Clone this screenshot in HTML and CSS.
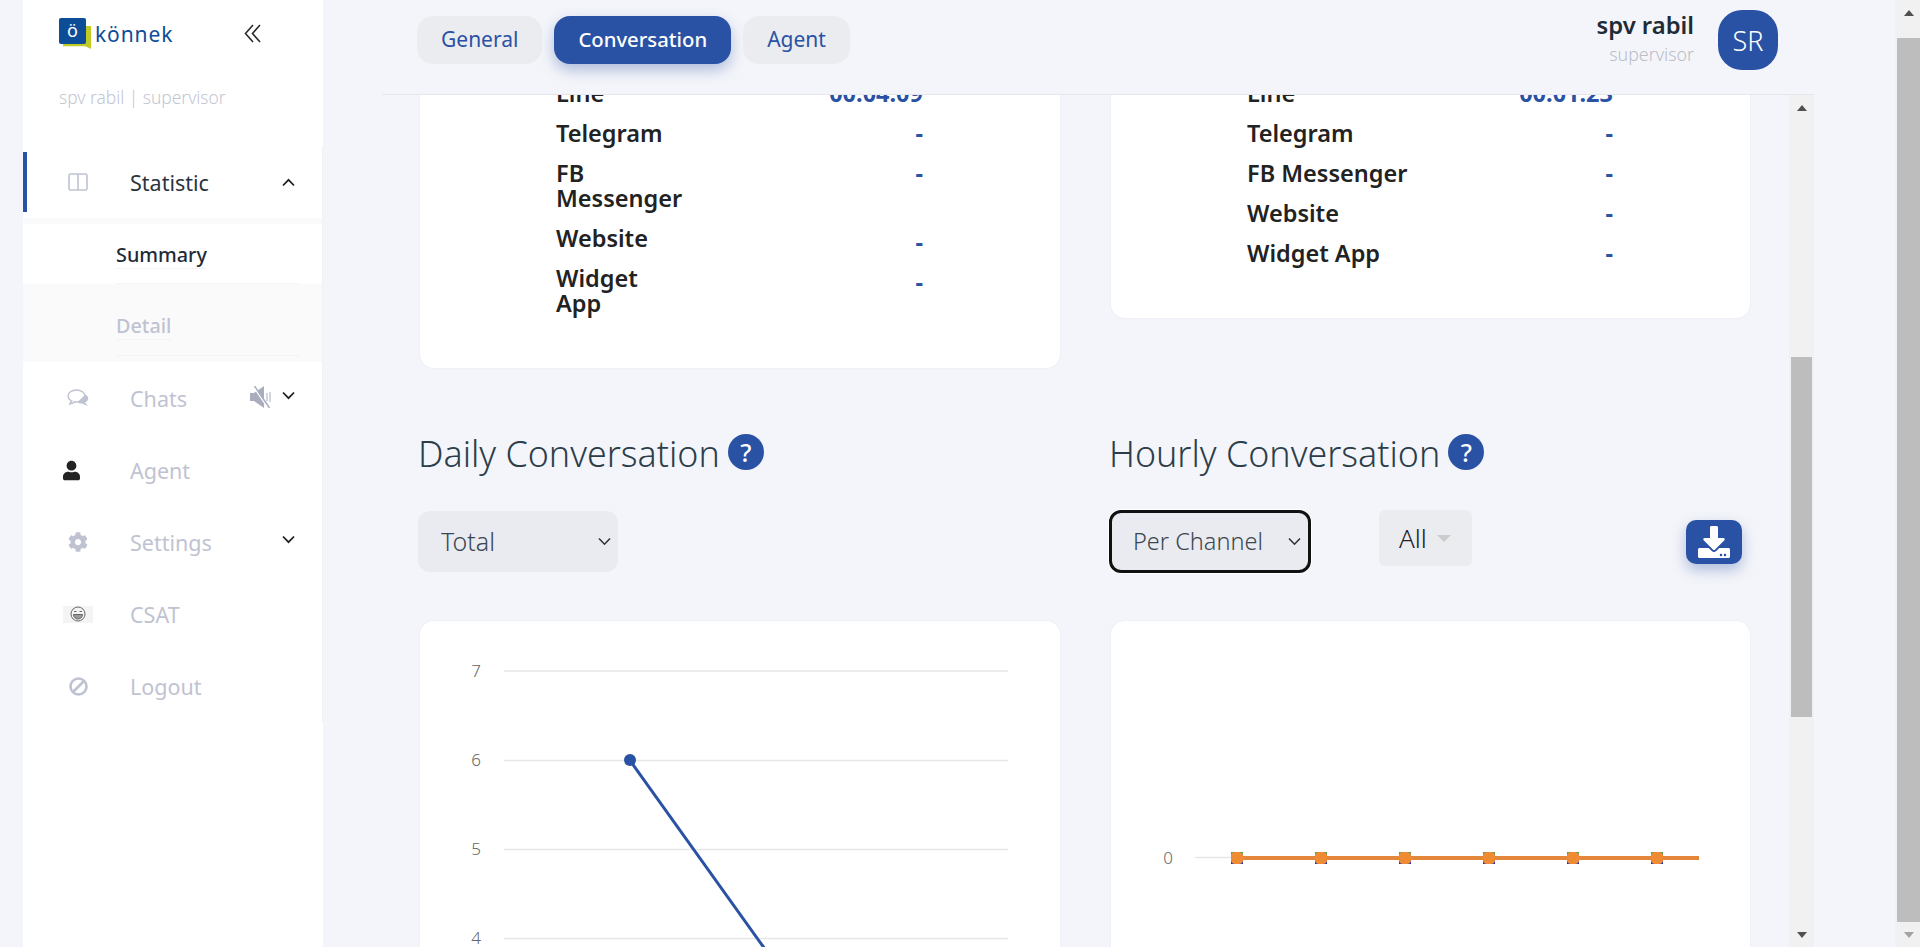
FILE: index.html

```html
<!DOCTYPE html>
<html lang="en">
<head>
    <meta charset="UTF-8">
    <meta name="viewport" content="width=device-width, initial-scale=1.0">
    <title>Konnek Dashboard</title>
    <link rel="stylesheet" href="styles.css">
</head>
<body>
    <aside class="sidebar">
        <div class="brand">
            <div class="logo">
                <div class="logo-mark">
                    <span class="logo-back"></span>
                    <span class="logo-front">ö</span>
                </div>
                <span class="logo-text">könnek</span>
            </div>
            <svg class="collapse" width="17" height="19" viewBox="0 0 17 19" fill="none" stroke="#2b2b2b" stroke-width="1.6"><path d="M9 1 1.5 9.5 9 18M16 1 8.500 9.500 16 18"/></svg>
        </div>
        <div class="whoami">spv rabil | supervisor</div>

        <nav class="nav">
            <div class="nav-item nav-active">
                <span class="nav-icon">
                    <svg width="20" height="18" viewBox="0 0 20 18" fill="none" stroke="#bfc3d1" stroke-width="1.6"><rect x="1" y="1" width="18" height="16" rx="1.500"/><path d="M10 1v16"/></svg>
                </span>
                <span class="nav-label">Statistic</span>
                <svg class="chev" width="13" height="9" viewBox="0 0 13 9" fill="none" stroke="#222" stroke-width="1.800"><path d="M1 7.500 6.500 1.800 12 7.500"/></svg>
            </div>
            <div class="nav-band"></div>
            <div class="sub-item sub-active"><div class="sub-inner"><span>Summary</span></div></div>
            <div class="sub-item sub-idle"><div class="sub-inner"><span>Detail</span></div></div>

            <div class="nav-item">
                <span class="nav-icon">
                    <svg width="23" height="18" viewBox="0 0 23 18" fill="none" stroke="#bfc3d1" stroke-width="1.500"><ellipse cx="9.500" cy="7" rx="8.500" ry="6"/><path d="M4.500 11.500 3 15l5-2" fill="#fff"/><path d="M18.500 5.500c4 2.500 3.500 6-.5 8l3 3.500-6-2.500c-2 0-3.500-.5-4.500-1.500" fill="#bfc3d1" stroke="none"/></svg>
                </span>
                <span class="nav-label">Chats</span>
                <svg class="mute" width="22" height="22" viewBox="0 0 22 22"><path d="M0 7h4l10-7v22L4 15H0z" fill="#a9adbd"/><path d="M17 7v8M20 6v10" stroke="#c6c9d5" stroke-width="1.500"/><path d="M3 0l15 22" stroke="#fff" stroke-width="1.500"/><path d="M4.500 0l15 22" stroke="#a9adbd" stroke-width="1.500"/></svg>
                <svg class="chev chev-down" width="13" height="9" viewBox="0 0 13 9" fill="none" stroke="#222" stroke-width="1.800"><path d="M1 1.500 6.500 7.200 12 1.500"/></svg>
            </div>
            <div class="nav-item">
                <span class="nav-icon">
                    <svg class="icon-user" width="19" height="21" viewBox="0 0 448 512"><path fill="#222" d="M224 256c70.700 0 128-57.300 128-128S294.700 0 224 0 96 57.300 96 128s57.300 128 128 128zm89.600 32h-16.700c-22.200 10.200-46.900 16-72.900 16s-50.600-5.800-72.900-16h-16.700C60.200 288 0 348.200 0 422.400V464c0 26.500 21.500 48 48 48h352c26.500 0 48-21.500 48-48v-41.600c0-74.200-60.200-134.400-134.400-134.400z"/></svg>
                </span>
                <span class="nav-label">Agent</span>
            </div>
            <div class="nav-item">
                <span class="nav-icon">
                    <svg width="20" height="20" viewBox="0 0 512 512"><path fill="#bfc3d1" d="M487.400 315.700l-42.600-24.600c4.300-23.200 4.300-47 0-70.200l42.600-24.600c4.900-2.800 7.100-8.600 5.500-14-11.100-35.600-30-67.800-54.700-94.600-3.800-4.100-10-5.100-14.800-2.300L380.800 110c-17.900-15.400-38.500-27.300-60.800-35.100V25.800c0-5.600-3.900-10.500-9.400-11.700-36.700-8.200-74.300-7.800-109.200 0-5.500 1.200-9.400 6.100-9.400 11.700V75c-22.200 7.900-42.800 19.800-60.800 35.100L88.700 85.500c-4.900-2.800-11-1.900-14.800 2.300-24.700 26.700-43.600 58.900-54.700 94.600-1.700 5.400.6 11.200 5.500 14L67.300 221c-4.300 23.200-4.300 47 0 70.200l-42.600 24.600c-4.900 2.800-7.100 8.600-5.500 14 11.100 35.600 30 67.800 54.700 94.600 3.800 4.100 10 5.100 14.800 2.300l42.600-24.600c17.900 15.400 38.500 27.300 60.800 35.100v49.200c0 5.600 3.900 10.500 9.400 11.700 36.700 8.200 74.300 7.800 109.200 0 5.500-1.200 9.400-6.100 9.400-11.700v-49.200c22.200-7.900 42.800-19.800 60.800-35.100l42.600 24.600c4.900 2.800 11 1.900 14.800-2.300 24.700-26.700 43.600-58.900 54.700-94.600 1.500-5.500-.7-11.300-5.600-14.100zM256 336c-44.100 0-80-35.900-80-80s35.900-80 80-80 80 35.900 80 80-35.900 80-80 80z"/></svg>
                </span>
                <span class="nav-label">Settings</span>
                <svg class="chev chev-down" width="13" height="9" viewBox="0 0 13 9" fill="none" stroke="#222" stroke-width="1.800"><path d="M1 1.500 6.500 7.200 12 1.500"/></svg>
            </div>
            <div class="nav-item">
                <span class="nav-icon">
                    <span class="csat-box">
                        <svg width="16" height="16" viewBox="0 0 16 16" fill="none" stroke="#666" stroke-width="1"><circle cx="8" cy="8" r="7"/><path d="M4 5.500h2.500M9.500 5.500H12"/><path d="M3.500 8.500h9c0 2.500-2 4.500-4.500 4.500s-4.500-2-4.500-4.500z" fill="#999"/></svg>
                    </span>
                </span>
                <span class="nav-label">CSAT</span>
            </div>
            <div class="nav-item">
                <span class="nav-icon">
                    <svg width="19" height="19" viewBox="0 0 19 19" fill="none" stroke="#bfc3d1" stroke-width="2.600"><circle cx="9.500" cy="9.500" r="8"/><path d="M4 15 15 4"/></svg>
                </span>
                <span class="nav-label">Logout</span>
            </div>
        </nav>
    </aside>

    <main class="main">
        <header class="topbar">
            <div class="tabs">
                <button class="tab">General</button>
                <button class="tab tab-active">Conversation</button>
                <button class="tab">Agent</button>
            </div>
            <div class="profile">
                <div class="profile-text">
                    <div class="profile-name">spv rabil</div>
                    <div class="profile-role">supervisor</div>
                </div>
                <div class="avatar">SR</div>
            </div>
        </header>

        <div class="viewport">
            <div class="board">
                <section class="card stat-card">
                    <div class="stat-row"><span class="stat-label">Line</span><span class="stat-value">00:04:09</span></div>
                    <div class="stat-row"><span class="stat-label">Telegram</span><span class="stat-value">-</span></div>
                    <div class="stat-row"><span class="stat-label">FB Messenger</span><span class="stat-value">-</span></div>
                    <div class="stat-row"><span class="stat-label">Website</span><span class="stat-value stat-value-low">-</span></div>
                    <div class="stat-row"><span class="stat-label">Widget App</span><span class="stat-value stat-value-low">-</span></div>
                </section>
                <section class="card stat-card stat-card-wide">
                    <div class="stat-row"><span class="stat-label">Line</span><span class="stat-value">00:01:23</span></div>
                    <div class="stat-row"><span class="stat-label">Telegram</span><span class="stat-value">-</span></div>
                    <div class="stat-row"><span class="stat-label">FB Messenger</span><span class="stat-value">-</span></div>
                    <div class="stat-row"><span class="stat-label">Website</span><span class="stat-value">-</span></div>
                    <div class="stat-row"><span class="stat-label">Widget App</span><span class="stat-value">-</span></div>
                </section>

                <h2 class="chart-title">Daily Conversation <span class="help">?</span></h2>
                <h2 class="chart-title">Hourly Conversation <span class="help">?</span></h2>

                <div class="filters">
                    <select class="select select-total">
                        <option>Total</option>
                        <option>Per Channel</option>
                    </select>
                </div>
                <div class="filters">
                    <select class="select select-focus">
                        <option>Per Channel</option>
                        <option>Total</option>
                    </select>
                    <div class="dropdown">All <span class="caret"></span></div>
                    <button class="download">
                        <svg width="32" height="32" viewBox="0 0 512 512"><path fill="#fff" d="M216 0h80c13.300 0 24 10.700 24 24v168h87.700c17.800 0 26.700 21.500 14.100 34.100L269.700 378.300c-7.500 7.500-19.800 7.500-27.300 0L90.100 226.100c-12.600-12.600-3.700-34.100 14.100-34.100H192V24c0-13.300 10.700-24 24-24zm296 376v112c0 13.300-10.700 24-24 24H24c-13.300 0-24-10.700-24-24V376c0-13.300 10.700-24 24-24h146.700l49 49c20.100 20.100 52.500 20.100 72.600 0l49-49H488c13.300 0 24 10.700 24 24zm-124 88c0-11-9-20-20-20s-20 9-20 20 9 20 20 20 20-9 20-20zm64 0c0-11-9-20-20-20s-20 9-20 20 9 20 20 20 20-9 20-20z"/></svg>
                    </button>
                </div>

                <section class="card chart-card">
                    <svg class="chart" width="640" height="500" viewBox="0 0 640 500">
                        <g class="grid-lines">
                            <path d="M84 50h504M84 139.500h504M84 228.500h504M84 317.500h504"/>
                        </g>
                        <g class="axis-text">
                            <text x="61" y="56">7</text>
                            <text x="61" y="145">6</text>
                            <text x="61" y="234">5</text>
                            <text x="61" y="323">4</text>
                        </g>
                        <path d="M210 139.500 468 500" stroke="#2a52a4" stroke-width="3" fill="none"/>
                        <circle cx="210" cy="139" r="6" fill="#2a52a4"/>
                    </svg>
                </section>
                <section class="card chart-card">
                    <svg class="chart" width="639" height="500" viewBox="0 0 639 500">
                        <path class="grid-line-short" d="M84 236.500h130"/>
                        <g class="axis-text">
                            <text x="62" y="243">0</text>
                        </g>
                        <g fill="#1a2fc0">
                            <rect x="120" y="237" width="12" height="6"/>
                            <rect x="204" y="237" width="12" height="6"/>
                            <rect x="288" y="237" width="12" height="6"/>
                            <rect x="372" y="237" width="12" height="6"/>
                            <rect x="456" y="237" width="12" height="6"/>
                            <rect x="540" y="237" width="12" height="6"/>
                        </g>
                        <g fill="#4a9a62">
                            <rect x="120" y="231" width="12" height="6"/>
                            <rect x="204" y="231" width="12" height="6"/>
                            <rect x="288" y="231" width="12" height="6"/>
                            <rect x="372" y="231" width="12" height="6"/>
                            <rect x="456" y="231" width="12" height="6"/>
                            <rect x="540" y="231" width="12" height="6"/>
                        </g>
                        <path d="M126 237h462" stroke="#e5873a" stroke-width="4"/>
                        <g fill="#ee8b33">
                            <rect x="120" y="231" width="12" height="12" rx="4"/>
                            <rect x="204" y="231" width="12" height="12" rx="4"/>
                            <rect x="288" y="231" width="12" height="12" rx="4"/>
                            <rect x="372" y="231" width="12" height="12" rx="4"/>
                            <rect x="456" y="231" width="12" height="12" rx="4"/>
                            <rect x="540" y="231" width="12" height="12" rx="4"/>
                        </g>
                    </svg>
                </section>
            </div>
        </div>
    </main>

    <div class="scrollbar scrollbar-inner">
        <span class="arrow arrow-up"></span>
        <span class="track-gap-top"></span>
        <span class="thumb"></span>
        <span class="track-gap-bottom"></span>
        <span class="arrow arrow-down"></span>
    </div>

    <div class="page-gutter"></div>

    <div class="scrollbar scrollbar-outer">
        <span class="arrow arrow-up"></span>
        <span class="thumb"></span>
        <span class="arrow arrow-down arrow-faded"></span>
    </div>
</body>
</html>
```

FILE: styles.css

```css
* {
    box-sizing: border-box;
}

html, body {
    margin: 0;
    height: 947px;
    overflow: hidden;
}

body {
    display: flex;
    padding-left: 23px;
    background-color: #f4f5fa;
    font-family: "Noto Sans", sans-serif;
    color: #212b36;
}

/* Sidebar */
.sidebar {
    width: 300px;
    flex-shrink: 0;
    background-color: #fff;
}

.brand {
    display: flex;
    align-items: center;
    justify-content: space-between;
    height: 67px;
    padding: 0 62px 0 36px;
}

.logo {
    display: flex;
    align-items: center;
    gap: 4px;
}

.logo-mark {
    position: relative;
    width: 32px;
    height: 31px;
}

.logo-back {
    position: absolute;
    left: 4px;
    top: 8px;
    width: 28px;
    height: 23px;
    background-color: #c2cb25;
    clip-path: polygon(0 0, 100% 0, 100% 100%, 80% 88%, 0 88%);
}

.logo-front {
    position: absolute;
    left: 0;
    top: 0;
    width: 27px;
    height: 26px;
    background-color: #0d4c97;
    border-radius: 2px;
    color: #fff;
    font-size: 18px;
    line-height: 24px;
    text-align: center;
}

.logo-text {
    color: #0d4c97;
    font-size: 21px;
    letter-spacing: 0.9px;
}

.whoami {
    margin-left: 36px;
    padding-top: 18px;
    height: 79px;
    color: #c3c6d2;
    font-size: 17.4px;
    font-weight: 300;
}

.nav {
    width: 300px;
    height: 576px;
    padding-top: 6px;
    border-right: 1px solid #f2f2f5;
}

.nav-item {
    display: flex;
    align-items: center;
    height: 72px;
    color: #bfc3d1;
    font-size: 21.5px;
}

.nav-active {
    height: 60px;
    color: #2a3440;
    box-shadow: inset 4px 0 0 #2a52a4;
}

.nav-band {
    height: 12px;
    border-top: 6px solid #fff;
    background-color: #fafafa;
}

.nav-icon {
    display: flex;
    justify-content: center;
    width: 30px;
    margin: 0 37px 0 40px;
}

.icon-user {
    margin-right: 13px;
}

.csat-box {
    display: flex;
    align-items: center;
    justify-content: center;
    width: 30px;
    height: 17px;
    background-color: #f4f4f4;
}

.chev {
    margin: 0 27px 0 auto;
}

.chev-down {
    margin-bottom: 5px;
}

.mute {
    margin: 0 10px 2px auto;
}

.mute + .chev {
    margin-left: 0;
}

.sub-item {
    padding-left: 93px;
    font-size: 19.8px;
    font-weight: 500;
}

.sub-inner {
    width: 183px;
    height: 60px;
    border-bottom: 1px solid #f4f4f6;
}

.sub-inner span {
    display: inline-block;
    line-height: 26px;
    border-bottom: 1px solid #f4f4f6;
}

.sub-active {
    height: 60px;
    padding-top: 0;
    background-color: #fff;
}

.sub-active .sub-inner {
    padding-top: 17px;
}

.sub-idle {
    height: 78px;
    padding-top: 12px;
    background-color: #fafafa;
    color: #bfc3d1;
}

.sub-idle .sub-inner {
    padding-top: 16px;
}

/* Main column */
.main {
    width: 1407px;
    margin-left: 59px;
    flex-shrink: 0;
    display: flex;
    flex-direction: column;
}

.topbar {
    position: relative;
    display: flex;
    justify-content: space-between;
    width: 1432px;
    height: 95px;
    padding: 16px 36px 0 35px;
    border-bottom: 1px solid #e5e6ea;
}

.tabs {
    display: flex;
    gap: 12px;
    height: 48px;
}

.tab {
    height: 48px;
    padding: 0 24px 2px;
    border: none;
    border-radius: 16px;
    background-color: #ebecf0;
    color: #2a52a4;
    font-family: inherit;
    font-size: 21px;
}

.tab-active {
    background-color: #2a52a4;
    color: #fff;
    font-size: 20.3px;
    font-weight: 500;
    box-shadow: 0 6px 14px rgba(42, 82, 164, 0.35);
}

.profile {
    display: flex;
    gap: 24px;
    margin-top: -6px;
}

.profile-text {
    text-align: right;
}

.profile-name {
    margin-top: -1px;
    font-size: 23.8px;
    font-weight: 600;
    line-height: 32px;
}

.profile-role {
    color: #bbbdc6;
    font-size: 17.8px;
    font-weight: 300;
    line-height: 26px;
}

.avatar {
    display: flex;
    align-items: center;
    justify-content: center;
    width: 60px;
    height: 60px;
    border-radius: 24px;
    background-color: #2a52a4;
    color: #fff;
    font-size: 27px;
    font-weight: 300;
}

.viewport {
    flex: 1;
    overflow: hidden;
}

.board {
    display: grid;
    grid-template-columns: 640px 639px;
    column-gap: 51px;
    align-items: start;
    margin: -14px 0 0 38px;
}

.card {
    background-color: #fff;
    border-radius: 14px;
    box-shadow: 0 0 2px rgba(40, 50, 80, 0.08);
}

.stat-card {
    padding: 0 137px 37px 136px;
    border-top-left-radius: 0;
    border-top-right-radius: 0;
}

.stat-row {
    display: flex;
    justify-content: space-between;
    align-items: flex-start;
    margin-bottom: 15px;
    font-size: 23.5px;
    line-height: 25px;
}

.stat-label {
    width: 115px;
    font-weight: 600;
    color: #222;
}

.stat-card-wide .stat-label {
    width: auto;
}

.stat-value {
    color: #2a52a4;
    font-weight: 700;
}

.stat-value-low {
    height: 25px;
    padding-top: 4px;
}

.chart-title {
    display: flex;
    align-items: center;
    gap: 8px;
    height: 50px;
    margin: 60px 0 32px -2px;
    color: #2c3e4a;
    font-size: 35.8px;
    font-weight: 300;
    white-space: nowrap;
}

.help {
    display: flex;
    align-items: center;
    justify-content: center;
    width: 36px;
    height: 36px;
    margin-top: -2px;
    border-radius: 50%;
    background-color: #2a52a4;
    color: #fff;
    font-size: 25px;
    font-weight: 500;
}

.filters {
    display: flex;
    align-items: flex-start;
    height: 63px;
    margin-left: -2px;
}

.select {
    appearance: none;
    height: 61px;
    padding: 0 0 2px 23px;
    border: none;
    border-radius: 12px;
    background-color: #e9ebf0;
    background-image: url("data:image/svg+xml,%3Csvg xmlns='http://www.w3.org/2000/svg' width='13' height='9'%3E%3Cpath d='M1 1.500 6.500 7.200 12 1.500' fill='none' stroke='%23333' stroke-width='1.600'/%3E%3C/svg%3E");
    background-repeat: no-repeat;
    background-position: right 7px center;
    color: #3c4650;
    font-family: inherit;
    font-size: 25px;
    font-weight: 300;
}

.select-total {
    width: 200px;
    margin-top: 1px;
}

.select-focus {
    width: 202px;
    height: 63px;
    padding: 0 0 2px 21px;
    border: 3px solid #111;
    box-shadow: 0 0 0 1px #fff;
    font-size: 23.5px;
}

.dropdown {
    display: flex;
    align-items: center;
    gap: 10px;
    width: 93px;
    height: 56px;
    margin-left: 68px;
    padding-left: 20px;
    border-radius: 6px;
    background-color: #ebecf0;
    color: #222;
    font-size: 26px;
    font-weight: 300;
}

.caret {
    width: 0;
    height: 0;
    border-left: 7px solid transparent;
    border-right: 7px solid transparent;
    border-top: 7px solid #ccc;
}

.download {
    display: flex;
    align-items: center;
    justify-content: center;
    width: 56px;
    height: 44px;
    margin: 10px 0 0 214px;
    padding: 0;
    border: none;
    border-radius: 10px;
    background-color: #2a52a4;
    box-shadow: 0 6px 14px rgba(42, 82, 164, 0.35);
}

.chart-card {
    height: 500px;
    margin-top: 48px;
}

.chart {
    display: block;
}

.grid-lines path,
.grid-line-short {
    stroke: #e6e6e6;
    stroke-width: 1.500;
    fill: none;
}

.axis-text text {
    fill: #666;
    font-size: 17px;
    font-weight: 300;
    text-anchor: end;
}

/* Scrollbars */
.scrollbar {
    display: flex;
    flex-direction: column;
    flex-shrink: 0;
    width: 25px;
    background-color: #f1f1f1;
}

.scrollbar-inner {
    height: 852px;
    margin-top: 95px;
    padding: 0 2px;
}

.scrollbar-inner .track-gap-top {
    height: 237px;
}

.scrollbar-inner .thumb {
    height: 360px;
}

.scrollbar-inner .track-gap-bottom {
    flex: 1;
}

.page-gutter {
    width: 81px;
    flex-shrink: 0;
}

.scrollbar-outer {
    height: 947px;
    padding-left: 2px;
}

.scrollbar-outer .thumb {
    height: 884px;
}

.thumb {
    display: block;
    background-color: #bdbdbd;
}

.arrow {
    display: flex;
    align-items: center;
    justify-content: center;
    flex-shrink: 0;
    height: 25px;
}

.arrow::before {
    content: "";
    width: 0;
    height: 0;
    border-left: 5.500px solid transparent;
    border-right: 5.500px solid transparent;
}

.arrow-up::before {
    border-bottom: 6px solid #505050;
}

.arrow-down::before {
    border-top: 6px solid #505050;
}

.arrow-faded::before {
    border-top-color: #a3a3a3;
}

.scrollbar-outer .arrow-up {
    height: 38px;
    padding-bottom: 12px;
}
```
